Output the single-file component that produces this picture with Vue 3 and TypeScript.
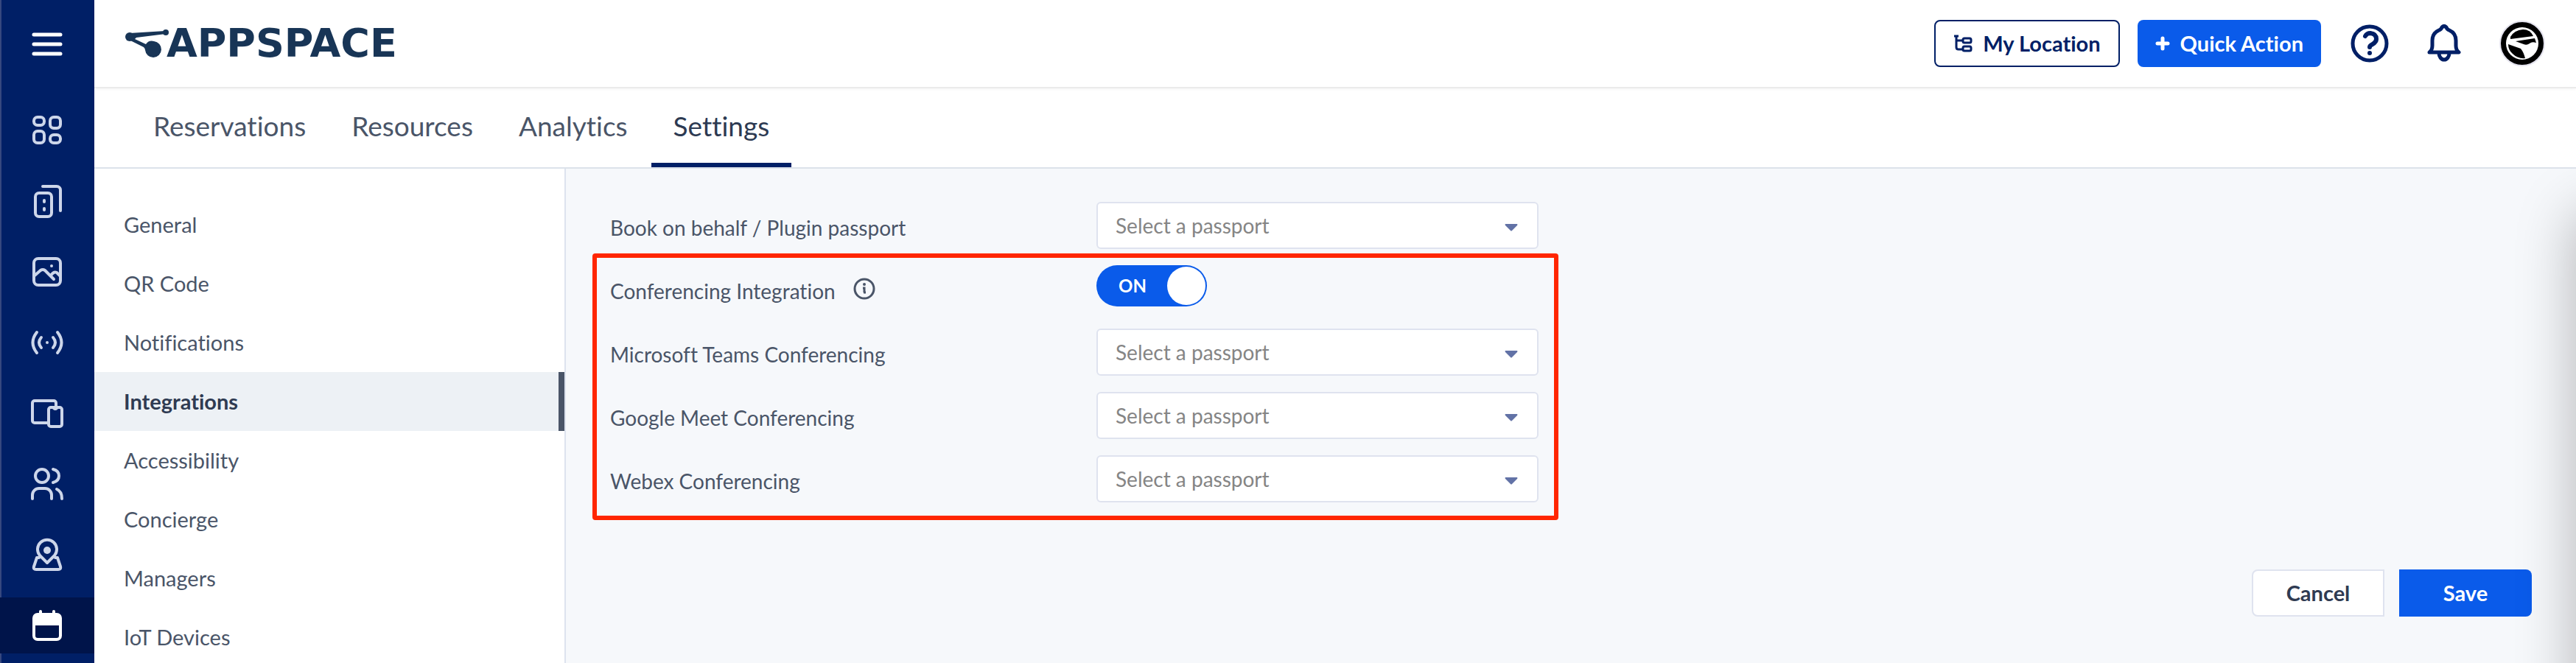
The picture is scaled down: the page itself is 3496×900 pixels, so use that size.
<script setup lang="ts">
import { ref } from 'vue'

interface Shape {
  d: string
  solid?: boolean
}
interface NavItem {
  name: string
  shapes: Shape[]
  active?: boolean
}
interface PassportField {
  id: string
  label: string
}

const navItems: NavItem[] = [
  {
    name: 'Dashboard',
    shapes: [
      { d: 'M15 10h4a5 5 0 0 1 5 5v1a5 5 0 0 1-5 5h-4a5 5 0 0 1-5-5v-1a5 5 0 0 1 5-5z' },
      { d: 'M37 10h4a5 5 0 0 1 5 5v5a5 5 0 0 1-5 5h-4a5 5 0 0 1-5-5v-5a5 5 0 0 1 5-5z' },
      { d: 'M15 29h4a5 5 0 0 1 5 5v6a5 5 0 0 1-5 5h-4a5 5 0 0 1-5-5v-6a5 5 0 0 1 5-5z' },
      { d: 'M37 34h4a5 5 0 0 1 5 5v1a5 5 0 0 1-5 5h-4a5 5 0 0 1-5-5v-1a5 5 0 0 1 5-5z' },
    ],
  },
  {
    name: 'Channels',
    shapes: [
      { d: 'M17 17h12a5 5 0 0 1 5 5v22a5 5 0 0 1-5 5H17a5 5 0 0 1-5-5V22a5 5 0 0 1 5-5z' },
      { d: 'M22 8h19a5 5 0 0 1 5 5v28' },
      { d: 'M24 27v2M24 38v2' },
    ],
  },
  {
    name: 'Library',
    shapes: [
      { d: 'M16 10h24a6 6 0 0 1 6 6v24a6 6 0 0 1-6 6H16a6 6 0 0 1-6-6V16a6 6 0 0 1 6-6z' },
      { d: 'M11 33l8-7q3-2 6 0l12 12M33 33q4-6 8-4l5 5' },
      { d: 'M32 20a2 2 0 1 0 4 0a2 2 0 1 0-4 0z', solid: true },
    ],
  },
  {
    name: 'Broadcast',
    shapes: [
      { d: 'M14 14q-11 14 0 28M42 14q11 14 0 28M20 21q-6 7 0 14M36 21q6 7 0 14' },
      { d: 'M26 28a2 2 0 1 0 4 0a2 2 0 1 0-4 0z', solid: true },
    ],
  },
  {
    name: 'Devices',
    shapes: [
      { d: 'M30 41H11a3 3 0 0 1-3-3V14a3 3 0 0 1 3-3h26a3 3 0 0 1 3 3v6' },
      { d: 'M33 20h12a3 3 0 0 1 3 3v20a3 3 0 0 1-3 3H33a3 3 0 0 1-3-3V23a3 3 0 0 1 3-3z' },
      { d: 'M37 21q2 2 4 0' },
    ],
  },
  {
    name: 'Users',
    shapes: [
      { d: 'M12 17a9 9 0 1 0 18 0a9 9 0 1 0-18 0z' },
      { d: 'M8 48v-5a9 9 0 0 1 9-9h8a9 9 0 0 1 9 9v5' },
      { d: 'M36 8q8 2 8 9t-8 9M41 35q7 3 7 13' },
    ],
  },
  {
    name: 'Locations',
    shapes: [
      { d: 'M28 39L18 29a13 13 0 1 1 20 0z' },
      { d: 'M17 32h-3l-4 12q-1 4 3 4h30q4 0 3-4l-4-12h-3' },
      { d: 'M23 22a5 5 0 1 0 10 0a5 5 0 1 0-10 0z', solid: true },
    ],
  },
  {
    name: 'Reservations',
    active: true,
    shapes: [
      { d: 'M15 13h26a5 5 0 0 1 5 5v24a5 5 0 0 1-5 5H15a5 5 0 0 1-5-5V18a5 5 0 0 1 5-5z' },
      { d: 'M10 14h36v14H10z', solid: true },
      { d: 'M19 9v5M37 9v5' },
    ],
  },
]

const tabs = ['Reservations', 'Resources', 'Analytics', 'Settings']
const activeTab = ref('Settings')

const sections = [
  'General',
  'QR Code',
  'Notifications',
  'Integrations',
  'Accessibility',
  'Concierge',
  'Managers',
  'IoT Devices',
]
const activeSection = ref('Integrations')

const conferencingOn = ref(true)
const providers: PassportField[] = [
  { id: 'teams', label: 'Microsoft Teams Conferencing' },
  { id: 'meet', label: 'Google Meet Conferencing' },
  { id: 'webex', label: 'Webex Conferencing' },
]
</script>

<template>
  <div class="app">
    <nav class="rail" aria-label="Main">
      <button class="menu" type="button" aria-label="Menu">
        <svg width="56" height="56" viewBox="0 0 56 56">
          <path d="M10 15h36M10 28h36M10 41h36" />
        </svg>
      </button>
      <a
        v-for="item in navItems"
        :key="item.name"
        class="rail-item"
        :class="{ active: item.active }"
        href="#"
        :aria-label="item.name"
      >
        <svg width="56" height="56" viewBox="0 0 56 56">
          <path v-for="s in item.shapes" :key="s.d" :d="s.d" :class="{ solid: s.solid }" />
        </svg>
      </a>
    </nav>

    <div class="page">
      <header class="topbar">
        <a class="logo" href="#">
          <svg width="60" height="40" viewBox="0 0 60 40" aria-hidden="true">
            <circle cx="6" cy="11" r="6" />
            <circle cx="55" cy="5" r="4" />
            <path d="M6 6L54 3l1 4L15 12l-2 2l15 7a10 10 0 0 1 11-4a11 11 0 1 1-12 12q0-2-2-4L7 16z" />
          </svg>
          <span>APPSPACE</span>
        </a>
        <div class="actions">
          <button class="btn outline" type="button">
            <svg width="26" height="24" viewBox="0 0 26 24" aria-hidden="true">
              <path d="M1 2h6M4 2v15q0 3 3 3h6M4 8h9" />
              <rect x="13" y="5" width="11" height="6" rx="2" />
              <rect x="13" y="16" width="11" height="6" rx="2" />
            </svg>
            My Location
          </button>
          <button class="btn primary" type="button">
            <svg width="20" height="20" viewBox="0 0 20 20" aria-hidden="true">
              <path class="plus" d="M10 3v14M3 10h14" />
            </svg>
            Quick Action
          </button>
          <button class="icon-btn" type="button" aria-label="Help">
            <svg width="52" height="52" viewBox="0 0 52 52">
              <circle class="bell" cx="26" cy="26" r="23" />
              <path d="M20 16q2-4 7-4q8 1 8 8q0 4-5 7q-4 2-4 4" />
              <circle class="dot" cx="26" cy="39" r="3" />
            </svg>
          </button>
          <button class="icon-btn" type="button" aria-label="Notifications">
            <svg width="52" height="52" viewBox="0 0 52 52">
              <path class="bell" d="M6 38q4-3 4-9v-7q0-10 9-14q3-1 4-4q3-3 6 0q1 3 4 4q9 4 9 14v7q0 6 4 9z" />
              <path class="bell" d="M19 39a7 9 0 0 0 14 0" />
            </svg>
          </button>
          <button class="icon-btn" type="button" aria-label="Account">
            <svg width="62" height="62" viewBox="0 0 62 62">
              <circle class="ring" cx="31" cy="31" r="30" />
              <circle class="face" cx="31" cy="31" r="22" />
              <path class="ink" d="M15 22q5-9 17-10q10 0 14 9L15 25z" />
              <path class="ink" d="M22 28l26-4 2 6q-6-2-9 1q-4 3-8 1z" />
              <path class="ink" d="M12 32l17 6q4 5 6 13q-10 1-17-6q-6-5-6-13z" />
            </svg>
          </button>
        </div>
      </header>

      <nav class="tabs" aria-label="Reservations">
        <a
          v-for="tab in tabs"
          :key="tab"
          href="#"
          :class="{ active: tab === activeTab }"
          @click.prevent="activeTab = tab"
          >{{ tab }}</a
        >
      </nav>

      <div class="body">
        <nav class="sections" aria-label="Settings">
          <a
            v-for="section in sections"
            :key="section"
            href="#"
            :class="{ active: section === activeSection }"
            @click.prevent="activeSection = section"
            >{{ section }}</a
          >
        </nav>

        <main class="content">
          <form @submit.prevent>
            <div class="group plain">
              <label class="name" for="plugin">Book on behalf / Plugin passport</label>
              <div class="picker">
                <select id="plugin">
                  <option>Select a passport</option>
                </select>
                <svg width="18" height="10" viewBox="0 0 18 10" aria-hidden="true">
                  <path d="M1 0h16q1 1 0 2l-7 7q-1 1-2 0L1 2q-1-1 0-2z" />
                </svg>
              </div>
            </div>

            <div class="group marked">
              <div class="name">
                <label for="conferencing">Conferencing Integration</label>
                <svg class="info" width="30" height="30" viewBox="0 0 30 30" aria-hidden="true">
                  <circle cx="15" cy="15" r="13" />
                  <path d="M13 14h2v6m-1 0h3" />
                  <circle class="dot" cx="15" cy="9" r="2" />
                </svg>
              </div>
              <div class="switch" :class="{ on: conferencingOn }">
                <input id="conferencing" v-model="conferencingOn" type="checkbox" />
                <span>{{ conferencingOn ? 'ON' : 'OFF' }}</span>
                <i></i>
              </div>
              <template v-for="field in providers" :key="field.id">
                <label class="name" :for="field.id">{{ field.label }}</label>
                <div class="picker">
                  <select :id="field.id">
                    <option>Select a passport</option>
                  </select>
                  <svg width="18" height="10" viewBox="0 0 18 10" aria-hidden="true">
                    <path d="M1 0h16q1 1 0 2l-7 7q-1 1-2 0L1 2q-1-1 0-2z" />
                  </svg>
                </div>
              </template>
            </div>

            <div class="footer">
              <button class="cancel" type="button">Cancel</button>
              <button class="save" type="submit">Save</button>
            </div>
          </form>
          <div class="drawer-shadow"></div>
        </main>
      </div>
    </div>
  </div>
</template>

<style>
body {
  margin: 0;
}
</style>

<style scoped>
* {
  box-sizing: border-box;
}
.app {
  display: flex;
  height: 100vh;
  overflow: hidden;
  font-family: Lato, 'Open Sans', sans-serif;
  font-size: 28px;
  line-height: 36px;
  font-variant-ligatures: none;
  color: #4a5568;
  background: #fff;
}
a {
  color: inherit;
  text-decoration: none;
}
button,
select {
  font: inherit;
  font-variant-ligatures: none;
  cursor: pointer;
}
svg {
  display: block;
  flex: none;
}

.rail {
  flex: none;
  width: 128px;
  display: flex;
  flex-direction: column;
  gap: 20px;
  background: linear-gradient(to right, #36487f 2px, #001f66 2px);
}
.rail svg {
  fill: none;
  stroke: #cdd6ea;
  stroke-width: 4;
  stroke-linecap: round;
  stroke-linejoin: round;
}
.rail .solid {
  fill: #cdd6ea;
  stroke: none;
}
.menu {
  flex: none;
  height: 119px;
  padding: 0;
  border: 0;
  background: none;
  display: flex;
  align-items: center;
  justify-content: center;
}
.rail .menu svg {
  stroke: #fff;
  stroke-width: 5;
}
.rail-item {
  flex: none;
  height: 76px;
  display: flex;
  align-items: center;
  justify-content: center;
}
.rail-item.active {
  background: #00144a;
}
.rail-item.active svg {
  stroke: #fff;
}
.rail-item.active .solid {
  fill: #fff;
}

.page {
  flex: 1;
  min-width: 0;
  display: flex;
  flex-direction: column;
}
.topbar {
  flex: none;
  height: 120px;
  padding: 0 42px 0 42px;
  display: flex;
  align-items: center;
  justify-content: space-between;
  border-bottom: 2px solid #ebebeb;
  box-shadow: 0 2px 4px rgba(0, 0, 0, 0.03);
}
.logo {
  display: flex;
  align-items: center;
  font-family: 'DejaVu Sans', sans-serif;
  font-size: 54px;
  font-weight: 700;
  line-height: 60px;
  color: #183556;
}
.logo svg {
  fill: #183556;
  margin-right: -4px;
}
.actions {
  display: flex;
  align-items: center;
}
.btn {
  height: 64px;
  padding: 0 24px;
  display: flex;
  align-items: center;
  font-size: 29px;
  font-weight: 700;
  border-radius: 8px;
}
.btn svg {
  fill: none;
  stroke: currentColor;
  stroke-width: 3;
  margin-right: 14px;
}
.btn .plus {
  stroke-width: 5;
  stroke-linecap: round;
}
.outline {
  border: 2px solid #001f66;
  color: #001f66;
  background: #fff;
}
.primary {
  margin: 0 40px 0 24px;
  border: 0;
  color: #fff;
  background: #0a5bea;
}
.icon-btn {
  padding: 0;
  border: 0;
  background: none;
  fill: none;
  stroke: #001f66;
  stroke-width: 6;
  stroke-linecap: round;
  stroke-linejoin: round;
}
.icon-btn + .icon-btn {
  margin-left: 49px;
}
.dot {
  fill: #001f66;
  stroke: none;
}
.bell {
  stroke-width: 5;
}
.ring {
  fill: #000;
  stroke: #e4e3ee;
  stroke-width: 2;
}
.face {
  fill: #fff;
  stroke: none;
}
.ink {
  fill: #000;
  stroke: none;
}

.tabs {
  flex: none;
  display: flex;
  gap: 2px;
  height: 109px;
  padding-left: 50px;
  border-bottom: 2px solid #dce2ea;
}
.tabs a {
  padding: 29px 30px 0;
  font-size: 37px;
  line-height: 44px;
  border-bottom: 6px solid transparent;
}
.tabs a.active {
  color: #2d3a52;
  border-color: #001f66;
}

.body {
  flex: 1;
  min-height: 0;
  display: flex;
}
.sections {
  flex: none;
  width: 640px;
  padding-top: 36px;
  overflow: hidden;
  font-size: 29px;
  border-right: 2px solid #dde3ee;
}
.sections a {
  display: block;
  padding: 22px 40px;
  border-right: 8px solid transparent;
}
.sections a.active {
  font-weight: 700;
  color: #2f3b52;
  background: #edf1f5;
  border-color: #4a5568;
}

.content {
  flex: 1;
  min-width: 0;
  position: relative;
  overflow: hidden;
  padding: 45px 60px 0 36px;
  background: #f6f8fb;
}
.group {
  width: fit-content;
  display: grid;
  grid-template-columns: 660px 600px;
  grid-auto-rows: 64px;
  row-gap: 22px;
}
.plain {
  padding: 0 24px;
}
.marked {
  margin-top: 6px;
  padding: 10px 21px 18px 18px;
  border: 6px solid #ff2600;
  border-radius: 4px;
}
.name {
  display: flex;
  gap: 24px;
  padding-top: 17px;
}
.info {
  fill: none;
  stroke: #4a5568;
  stroke-width: 3;
}
.info .dot {
  fill: #4a5568;
}
.picker {
  display: grid;
  align-items: center;
}
.picker select,
.picker svg {
  grid-area: 1 / 1;
}
.picker select {
  width: 100%;
  height: 64px;
  padding: 0 24px;
  appearance: none;
  color: #858585;
  background: #fff;
  border: 2px solid #dfe3ef;
  border-radius: 6px;
}
.picker svg {
  justify-self: end;
  margin: 6px 28px 0 0;
  fill: #6272a6;
  pointer-events: none;
}
.switch {
  position: relative;
  width: 150px;
  height: 56px;
  padding: 0 2px 0 30px;
  display: flex;
  align-items: center;
  justify-content: space-between;
  border-radius: 28px;
  font-size: 24px;
  font-weight: 700;
  color: #fff;
  background: #8b94a5;
}
.switch.on {
  background: #0a5bea;
}
.switch input {
  position: absolute;
  inset: 0;
  width: 100%;
  height: 100%;
  margin: 0;
  opacity: 0;
  cursor: pointer;
}
.switch i {
  width: 52px;
  height: 52px;
  border-radius: 50%;
  background: #fff;
}

.footer {
  display: flex;
  justify-content: flex-end;
  gap: 20px;
  margin-top: 67px;
}
.footer button {
  width: 180px;
  height: 64px;
  padding: 0;
  font-size: 29px;
  font-weight: 700;
}
.cancel {
  color: #2f3b52;
  background: #fff;
  border: 2px solid #dfe3ef;
  border-radius: 8px 0 0 8px;
}
.save {
  color: #fff;
  background: #0a5bea;
  border: 0;
  border-radius: 0 8px 8px 0;
}
.drawer-shadow {
  position: absolute;
  top: 60px;
  bottom: -100px;
  left: 100%;
  width: 200px;
  box-shadow: 0 0 80px rgba(0, 0, 0, 0.28);
  pointer-events: none;
}
</style>
